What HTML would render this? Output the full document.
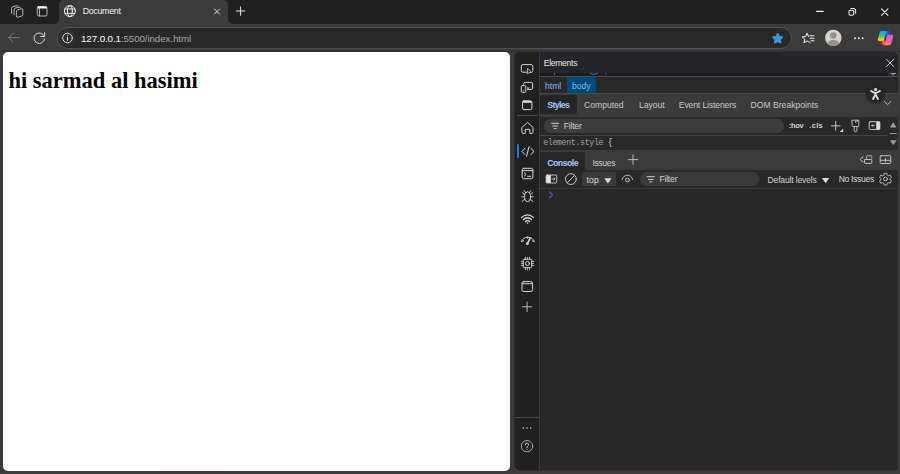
<!DOCTYPE html>
<html lang="en">
<head>
<meta charset="utf-8">
<title>Document</title>
<style>
*{box-sizing:border-box;margin:0;padding:0}
html,body{width:900px;height:474px;overflow:hidden;background:#3b3b3b}
body{font-family:"Liberation Sans",sans-serif;color:#e3e3e3;position:relative}
.abs{position:absolute}
.t{position:absolute;white-space:nowrap;line-height:1;transform-origin:0 50%;font-size:8.6px;color:#dedede}
.b{font-weight:bold}
#icons{position:absolute;left:0;top:0;width:900px;height:474px;overflow:visible}
/* ---------- browser chrome ---------- */
#strip{left:0;top:0;width:900px;height:23.6px;background:#202020}
#tab{left:58.8px;top:0;width:169.4px;height:24px;background:#3b3b3b;border-radius:5px 5px 0 0}
#tab:before,#tab:after{content:"";position:absolute;bottom:.4px;width:5px;height:5px}
#tab:before{left:-5px;background:radial-gradient(circle at 0 0,#202020 4.6px,#3b3b3b 5.2px)}
#tab:after{right:-5px;background:radial-gradient(circle at 100% 0,#202020 4.6px,#3b3b3b 5.2px)}
#omni{left:56.5px;top:27.4px;width:735.3px;height:22px;border-radius:11px;background:#282828;border:1px solid #525252}
#bottomline{left:0;top:473.3px;width:900px;height:.7px;background:linear-gradient(90deg,#3c3b3b,#453a3a 30%,#4c3838 58%,#453a3a 85%,#3d3b3b)}
/* ---------- page ---------- */
#page{left:3px;top:52px;width:507.3px;height:418.7px;background:#fff;border-radius:5px}
#page h1{position:absolute;left:5.4px;top:18.1px;font-family:"Liberation Serif",serif;font-weight:bold;font-size:22.5px;color:#000;white-space:nowrap;line-height:1}
/* ---------- devtools ---------- */
#dt{left:0;top:0;width:900px;height:474px;clip-path:inset(52px 2.1px 3.7px 514.5px round 5px 5px 3.5px 5px)}
#dt div{position:absolute}
</style>
</head>
<body>
<!-- tab strip -->
<div id="strip" class="abs"></div>
<div id="tab" class="abs"></div>
<span class="t" id="tabtitle" style="left:82.7px;top:6.7px;font-size:8.8px;color:#f2f2f2;letter-spacing:-0.28px">Document</span>

<!-- toolbar -->
<div id="omni" class="abs"></div>
<span class="t" id="url" style="left:81.0px;top:33.5px;font-size:9.8px;color:#fff;letter-spacing:-0.11px">127.0.0.1<span style="color:#a6a6a6">:5500/index.html</span></span>

<div class="abs" style="left:0;top:50px;width:900px;height:2px;background:linear-gradient(#3b3b3b,#343434 45%,#2a2a2a)"></div>
<!-- page -->
<div id="page" class="abs"><h1>hi sarmad al hasimi</h1></div>

<!-- devtools -->
<div id="dt" class="abs">
  <div style="left:514px;top:52px;width:385px;height:420px;background:#272727"></div>
  <!-- activity bar -->
  <div style="left:514px;top:52px;width:25.4px;height:420px;background:#202020"></div>
  <div style="left:539.2px;top:52px;width:.9px;height:420px;background:#3a3a3a"></div>
  <div style="left:516.7px;top:115px;width:21.4px;height:.9px;background:#4a4a4a"></div>
  <div style="left:514px;top:416.5px;width:25.4px;height:.9px;background:#464646"></div>
  <div style="left:517.3px;top:144px;width:1.8px;height:14px;background:#1a7fdc;border-radius:1px"></div>
  <!-- elements header -->
  <div style="left:540px;top:52px;width:358px;height:23.8px;background:#24252b"></div>
  <div style="left:540px;top:72.6px;width:348.3px;height:3.2px;background:#1b1b1f"></div>
  <div style="left:888.3px;top:72.6px;width:10px;height:3.2px;background:#27282c"></div>
  <div style="left:540px;top:75.7px;width:358px;height:.9px;background:#4c4c4c"></div>
  <!-- breadcrumbs -->
  <div style="left:540px;top:76.6px;width:358px;height:16.7px;background:#282828"></div>
  <div style="left:566.8px;top:76.6px;width:29px;height:16.6px;background:#004a77"></div>
  <!-- styles tab row -->
  <div style="left:540px;top:93.2px;width:358px;height:23.6px;background:#3b3b3b"></div>
  <div style="left:540px;top:92.9px;width:358px;height:.8px;background:#484848"></div>
  <div style="left:540px;top:95.2px;width:36.7px;height:19px;background:#252525;border-radius:2px"></div>
  <!-- filter row -->
  <div style="left:540px;top:116.8px;width:358px;height:18.4px;background:#282828"></div>
  <div style="left:544.1px;top:119px;width:240.4px;height:14.2px;background:#3d3d3d;border-radius:7.1px"></div>
  <div style="left:540px;top:134.6px;width:348px;height:.8px;background:#444"></div>
  <!-- element.style row -->
  <div style="left:540px;top:135.6px;width:348px;height:14.8px;background:#282828"></div>
  <div style="left:888px;top:116.8px;width:10px;height:33.6px;background:#292929"></div>
  <!-- drawer header -->
  <div style="left:540px;top:150.4px;width:358px;height:19.3px;background:#3b3b3b"></div>
  <div style="left:540px;top:152.4px;width:45px;height:17.4px;background:#262626;border-radius:2px 2px 0 0"></div>
  <!-- console toolbar -->
  <div style="left:540px;top:169.7px;width:358px;height:17.8px;background:#282828"></div>
  <div style="left:540px;top:187.7px;width:358px;height:.9px;background:#3a3a3a"></div>
  <div style="left:582.2px;top:172.3px;width:33.8px;height:13.7px;background:#3b3b3b;border-radius:2px"></div>
  <div style="left:639.8px;top:172.1px;width:119.6px;height:13.7px;background:#3a3a3a;border-radius:6.9px"></div>
</div>

<!-- devtools text -->
<span class="t" id="tElements" style="left:543.7px;top:59.0px;color:#e6e6e6;letter-spacing:-0.29px">Elements</span>
<span class="t" id="tHtml" style="left:545.0px;top:81.8px;color:#8ab4f8">html</span>
<span class="t" id="tBody" style="left:572.0px;top:81.8px;color:#8ab4f8">body</span>
<span class="t b" id="tStyles" style="left:547.2px;top:100.5px;font-size:8.8px;color:#a6c4f7;letter-spacing:-0.65px">Styles</span>
<span class="t" id="tComputed" style="left:584.0px;top:101.2px;color:#c8c8c8">Computed</span>
<span class="t" id="tLayout" style="left:638.9px;top:101.2px;color:#c8c8c8">Layout</span>
<span class="t" id="tEvent" style="left:678.8px;top:101.2px;color:#c8c8c8;letter-spacing:-0.13px">Event Listeners</span>
<span class="t" id="tDom" style="left:750.6px;top:101.2px;color:#c8c8c8">DOM Breakpoints</span>
<span class="t" id="tFilter1" style="left:563.7px;top:122.1px;color:#d0d0d0;letter-spacing:-0.2px">Filter</span>
<span class="t b" id="tHov" style="left:788.8px;top:122.2px;font-size:7.4px;color:#d4d4d4;letter-spacing:-0.3px">:hov</span>
<span class="t b" id="tCls" style="left:809.2px;top:122.2px;font-size:7.4px;color:#d4d4d4;letter-spacing:0.4px">.cls</span>
<span class="t" id="tElStyle" style="left:543.2px;top:138.9px;font-family:'Liberation Mono',monospace;font-size:8.3px;letter-spacing:-0.37px;color:#a2a2a2">element.style <span style="color:#d8d0c0">{</span></span>
<span class="t b" id="tConsole" style="left:547.2px;top:158.5px;font-size:8.8px;color:#a6c4f7;letter-spacing:-0.55px">Console</span>
<span class="t" id="tIssues" style="left:592.4px;top:158.7px;color:#d0d0d0;letter-spacing:-0.36px">Issues</span>
<span class="t" id="tTop" style="left:586.4px;top:175.9px;color:#d8d8d8;letter-spacing:0.23px">top</span>
<span class="t" id="tFilter2" style="left:659.4px;top:175.4px;color:#d0d0d0;letter-spacing:-0.2px">Filter</span>
<span class="t" id="tDefault" style="left:767.5px;top:175.6px;color:#d0d0d0;letter-spacing:-0.17px">Default levels</span>
<span class="t" id="tNoIssues" style="left:838.7px;top:174.9px;color:#d8d8d8;letter-spacing:-0.34px">No Issues</span>

<svg id="icons" viewBox="0 0 900 474" fill="none" stroke="#d6d6d6" stroke-width="1" stroke-linecap="round" stroke-linejoin="round">
<!-- ===== tab strip icons ===== -->
<g stroke="#e4e4e4" stroke-width=".75">
  <!-- workspaces -->
  <path d="M16.4 11.6q0-1.3 1.2-1.7l3.7-1.1q1.5-.4 1.5 1.1v4.5q0 1.300-1.200 1.700l-3.700 1.100q-1.500.400-1.500-1.100z"/>
  <path d="M14 14.700v-4.800q0-1.300 1.200-1.700l3.700-1.100q1.200-.3 1.500.500"/>
  <path d="M11.500 13.300v-4.800q0-1.300 1.200-1.700l3.700-1.100q1.200-.3 1.500.500"/>
  <!-- tab actions -->
  <rect x="37.300" y="6.500" width="9.700" height="9.500" rx="1.600"/>
  <path d="M37.500 7.500h9.300" stroke="#f4f4f4" stroke-width="2" stroke-linecap="butt"/>
  <path d="M39.500 8.500v7.400"/>
  <!-- globe -->
  <g stroke="#f0f0f0" stroke-width=".95"><circle cx="69.900" cy="11.100" r="5.500"/>
  <ellipse cx="69.900" cy="11.100" rx="2.500" ry="5.500"/>
  <path d="M65 9h9.800M65 13.300h9.800"/></g>
</g>
<g stroke="#e6e6e6" stroke-width="1">
  <!-- tab close -->
  <path d="M214.500 9l5 5M219.500 9l-5 5" stroke-width=".95"/>
  <!-- new tab -->
  <path d="M236.300 11h8.600M240.600 6.700v8.600"/>
  <!-- window controls -->
  <path d="M816.600 11.400h6.600" stroke-width="1.100" stroke="#f2f2f2"/>
  <rect x="849" y="10.300" width="4.700" height="4.900" rx="1.300" stroke-width="1.050" stroke="#f2f2f2"/>
  <path d="M850.900 8.500h2.500q2.200 0 2.200 2.200v2.500" stroke-width="1.050" stroke="#f2f2f2"/>
  <path d="M881.500 8.800l6.500 6.500M888 8.800l-6.500 6.500" stroke-width="1.050" stroke="#f2f2f2"/>
</g>
<!-- ===== toolbar icons ===== -->
<g stroke="#7c7c7c" stroke-width="1">
  <path d="M8.800 37.600h10.600M13.300 33l-4.600 4.600l4.600 4.600"/>
</g>
<g stroke="#d8d8d8" stroke-width="1">
  <!-- refresh -->
  <path d="M44.300 36.300a5.300 5.300 0 1 0 .3 2.600"/>
  <path d="M44.700 32.600v3.900h-3.900"/>
  <!-- info -->
  <circle cx="67.400" cy="38.200" r="8.400" fill="#313131" stroke="none"/>
  <circle cx="67.500" cy="38" r="4.800" stroke-width=".95" stroke="#e4e4e4"/>
  <path d="M67.500 37.500v2.800" stroke-width="1" stroke="#e4e4e4"/>
  <circle cx="67.500" cy="35.800" r=".6" fill="#e4e4e4" stroke="none"/>
</g>
<!-- favourite star (filled) -->
<path d="M777.70 33.70L779.29 36.52L782.46 37.15L780.27 39.53L780.64 42.75L777.70 41.40L774.76 42.75L775.13 39.53L772.94 37.15L776.11 36.52z" fill="#3f95dc" stroke="#3f95dc" stroke-width="1.5"/>
<!-- favourites -->
<g stroke="#f0f0f0" stroke-width="1">
  <path d="M808.51 36.56L807.10 33.20L805.69 36.56L802.06 36.86L804.82 39.24L803.98 42.79L807.10 40.90L810.22 42.79"/>
  <path d="M809.800 35.800h4.200M810.200 38.300h3.800M811 40.800h3" stroke-width="1.100" stroke="#ececec"/>
</g>
<!-- profile -->
<clipPath id="pc"><circle cx="833.300" cy="37.900" r="8.200"/></clipPath>
<circle cx="833.300" cy="37.900" r="8.200" fill="#d6d3cf" stroke="none"/>
<circle cx="833.300" cy="35.500" r="3.200" fill="#96928e" stroke="none"/>
<ellipse cx="833.300" cy="46.300" rx="7.200" ry="6.600" fill="#96928e" stroke="none" clip-path="url(#pc)"/>
<!-- more -->
<g fill="#efefef" stroke="none"><circle cx="855" cy="38.200" r=".95"/><circle cx="858.800" cy="38.200" r=".95"/><circle cx="862.600" cy="38.200" r=".95"/></g>
<!-- copilot -->
<defs>
  <linearGradient id="cpl" x1="0" y1="0" x2="0" y2="1"><stop offset="0" stop-color="#1f9cf2"/><stop offset=".3" stop-color="#20b8c8"/><stop offset=".55" stop-color="#4cc85e"/><stop offset=".8" stop-color="#e8d030"/><stop offset="1" stop-color="#f8a428"/></linearGradient>
  <linearGradient id="cpr" x1="0" y1="0" x2="0" y2="1"><stop offset="0" stop-color="#b860f0"/><stop offset=".4" stop-color="#e85cc0"/><stop offset=".7" stop-color="#f6648a"/><stop offset="1" stop-color="#f8903c"/></linearGradient>
  <linearGradient id="cpt" x1="0" y1="0" x2="1" y2="0"><stop offset="0" stop-color="#2a78e8"/><stop offset="1" stop-color="#1c3fc4"/></linearGradient>
  <linearGradient id="cpb" x1="0" y1="0" x2="1" y2="0"><stop offset="0" stop-color="#f03a2a"/><stop offset="1" stop-color="#f8783a"/></linearGradient>
</defs>
<g stroke="none">
  <path d="M886.100 31h2q1.300 0 1.700 1.300l.7 2.500h-5.200z" fill="url(#cpt)"/>
  <path d="M881.400 31h4.900l-2.500 10.200h-4.500q-2.100 0-1.500-2l1.800-6.500q.5-1.700 1.800-1.700z" fill="url(#cpl)"/>
  <path d="M881.500 41h4l-.9 4.200h-1q-1.500 0-1.800-1.600z" fill="url(#cpb)"/>
  <path d="M887.100 34.800h4.500q2.100 0 1.500 2l-1.800 6.600q-.5 1.800-2 1.800h-4.700z" fill="url(#cpr)"/>
</g>
<!-- ===== devtools activity bar ===== -->
<g stroke="#d6d6d6" stroke-width="1">
  <!-- inspect -->
  <path d="M526.500 72.200h-3.600q-1.600 0-1.600-1.600v-4.400q0-1.600 1.600-1.600h8.300q1.600 0 1.600 1.600v4.400q0 .9-.5 1.300"/>
  <path d="M527.600 68.600v5.400l1.500-1.500h2.200z" stroke-width=".8"/>
  <!-- device emulation -->
  <path d="M523.700 84.500v-.7q0-1.400 1.400-1.400h6.100q1.400 0 1.400 1.400v4.300q0 1.400-1.400 1.400h-3.700"/>
  <rect x="521.300" y="85.600" width="4.500" height="6.800" rx="1"/>
  <path d="M527.400 88h1.600M523.400 90.800h.3"/>
  <!-- welcome -->
  <rect x="522.500" y="100.800" width="9.400" height="8.800" rx="1.500"/>
  <path d="M522.700 101.900h9" stroke-width="1.900" stroke-linecap="butt"/>
  <!-- home -->
  <path d="M522 127.400l5.500-5l5.500 5v5.300q0 .7-.7.700h-2.500v-4h-4.600v4h-2.500q-.7 0-.7-.7z" stroke-width="1"/>
  <!-- elements </> -->
  <path d="M525 148.300l-3.100 3.100l3.100 3.100M530.900 148.300l3.100 3.100l-3.100 3.100M529 146.700l-2.400 9.600" stroke-width="1"/>
  <!-- console -->
  <rect x="522.200" y="168.300" width="10.700" height="10.400" rx="1.500"/>
  <path d="M522.400 170.600h10.300M524.400 172.800l1.800 1.600l-1.800 1.600M527.600 176.300h3.200"/>
  <!-- bug (sources) -->
  <path d="M524.600 195.400q0-3.600 2.900-3.600t2.900 3.600v2.600q0 3.600-2.900 3.600t-2.900-3.600z"/>
  <path d="M525.500 192.500l-1.500-1.900M529.500 192.500l1.500-1.900M524.500 196.800h-2.700M524.600 199.300l-2.400 2M524.600 194.500l-2.400-1.900M530.500 196.800h2.700M530.400 199.300l2.400 2M530.400 194.500l2.400-1.900" stroke-width=".9"/>
  <!-- network (wifi) -->
  <path d="M521.600 217.400q5.900-5.200 11.800 0M523.500 219.500q4-3.500 8 0M525.400 221.500q2.100-1.800 4.200 0" stroke="#e0e0e0" stroke-width="1.250"/>
  <circle cx="527.500" cy="223" r=".85" fill="#cdcdcd" stroke="none"/>
  <!-- performance -->
  <path d="M521.300 241.700a7.100 7.100 0 0 1 13.200 0"/>
  <path d="M527.500 243.500l2.500-5.100" stroke-width="1.500"/>
  <circle cx="527.400" cy="243.700" r="1.350" fill="#d6d6d6" stroke="none"/>
  <path d="M522.300 241.500l1.400-.9M527.600 236.700v1.700M533.500 241.500l-1.400-.9" stroke-width=".9"/>
  <!-- memory -->
  <rect x="523.200" y="259.200" width="8.500" height="8.500" rx="1.400"/>
  <circle cx="527.450" cy="263.450" r="2"/>
  <path d="M525.400 257.200v1.800M527.450 257.200v1.800M529.500 257.200v1.800M525.400 268v1.800M527.450 268v1.800M529.500 268v1.800M521.300 261.400h1.700M521.300 263.450h1.700M521.300 265.500h1.700M531.900 261.400h1.700M531.900 263.450h1.700M531.900 265.500h1.700" stroke-width=".8"/>
  <!-- application -->
  <rect x="522" y="281.600" width="10.600" height="9.900" rx="1.800"/>
  <path d="M522.200 283.700h10.200"/>
  <!-- more tools + -->
  <path d="M522.300 306.800h9.600M527.100 302v9.600" stroke="#b8b8b8"/>
  <!-- help -->
  <circle cx="527" cy="446.200" r="5.700" stroke="#c4c4c4" stroke-width=".8"/>
  <path d="M525.300 444.800q0-1.700 1.700-1.700t1.700 1.600q0 1-1 1.600q-.7.500-.7 1.400" stroke-width=".9"/>
  <circle cx="527" cy="449.300" r=".55" fill="#cdcdcd" stroke="none"/>
</g>
<g fill="#d0d0d0" stroke="none"><circle cx="523.300" cy="428.100" r=".8"/><circle cx="527" cy="428.100" r=".8"/><circle cx="530.700" cy="428.100" r=".8"/></g>
<!-- ===== devtools main icons ===== -->
<g stroke="#d0d0d0" stroke-width=".9">
  <!-- close devtools -->
  <path d="M886.400 59.200l7.400 7.400M893.800 59.200l-7.400 7.400" stroke="#dadada"/>
  <!-- chevron more tabs -->
  <path d="M884.500 101.600l3.100 3l3.100-3" stroke="#c4c4c4"/>
  <!-- filter icon (styles) -->
  <path d="M551.600 123.300h7.200M552.900 126h4.600M554.300 128.600h1.800" stroke-width="1"/>
  <!-- new style rule + -->
  <path d="M831.300 125.800h8.800M835.700 121.400v8.800"/>
  <path d="M843.200 128.500v3.500h-3.500z" fill="#d8d8d8" stroke="none"/>
  <!-- brush -->
  <path d="M852.200 120.200h6.600v5.600q0 .7-.7.7h-5.200q-.7 0-.7-.7zM854.200 126.600v3.600q0 1.500 1.350 1.500t1.350-1.500v-3.600M855.700 120.200v2.400M857.300 120.200v1.500" stroke-width=".85"/>
  <!-- toggle sidebar (styles) -->
  <rect x="869.200" y="121.700" width="10.700" height="7.800" rx="1"/>
  <path d="M876.200 121.800h3.700v7.600h-3.700z" fill="#e0e0e0" stroke="none"/>
  <path d="M872 125.600h2.400" stroke-width=".8"/><path d="M872.800 124.200v2.800l-1.700-1.400z" fill="#d0d0d0" stroke="none"/>
  <!-- drawer + -->
  <path d="M628.300 159.600h9.400M633 154.900v9.400" stroke="#c6c6c6"/>
  <!-- drawer right icons -->
  <path d="M863 157q-2.600 1.200-2.600 2.400q0 1.200 2.600 2.400" stroke-width="1"/>
  <rect x="864.500" y="159.500" width="7.300" height="3.900" rx=".7"/>
  <path d="M866.600 158.300v-1.700q0-.9.900-.9h3.400q.9 0 .9.900v1.700" stroke-width=".8" stroke-dasharray="1.500 .8"/>
  <rect x="880.200" y="155.700" width="10.600" height="7.800" rx="1"/>
  <path d="M880.400 160.300h10.200M885.500 158.800v3"/>
  <!-- console sidebar toggle -->
  <rect x="546.100" y="175" width="10.700" height="8" rx="1"/>
  <path d="M546.200 175.100h4.700v7.800h-4.700z" fill="#e4e4e4" stroke="none"/>
  <path d="M552 179h3M553.800 177.800l1.200 1.200l-1.200 1.200" stroke-width=".8"/>
  <!-- clear console -->
  <circle cx="570.900" cy="179.100" r="5.400"/>
  <path d="M567.100 182.900l7.600-7.600"/>
  <!-- eye -->
  <path d="M622 179.600q1.600-4.400 5.400-4.400t5.400 4.400"/>
  <circle cx="627.400" cy="180" r="1.900"/>
  <!-- filter icon (console) -->
  <path d="M647.100 176.700h7.300M648.400 179.400h4.700M649.800 181.900h1.900" stroke-width="1"/>
  <!-- gear -->
  <circle cx="885.500" cy="179" r="1.900"/>
  <path d="M884.300 173.300h2.400l.5 1.700l1.300.7l1.700-.5l1.200 2.100l-1.200 1.200v1.400l1.200 1.200l-1.200 2.100l-1.700-.5l-1.300.7l-.5 1.700h-2.400l-.5-1.700l-1.300-.7l-1.700.5l-1.200-2.100l1.200-1.200v-1.400l-1.200-1.200l1.200-2.100l1.700.5l1.300-.7z" stroke-width=".85"/>
</g>
<g fill="#e0e0e0" stroke="none">
  <path d="M604.300 178.300h7.200l-3.600 5.100z"/>
  <path d="M822 178.100h7.200l-3.600 5.100z"/>
</g>
<!-- scrollbar bits -->
<g fill="#9c9c9c" stroke="none">
  <path d="M889.800 127.600l3.400-5.300l3.400 5.300z"/>
  <path d="M889.900 140.300h6.800l-3.400 4.800z"/>
  <rect x="889.800" y="133" width="6.800" height="1"/>
  <path d="M890.600 73.100h5.400v.9h-5.400zM891.700 74.200h3.200l-1.600 1.500z" fill="#9a9a9a"/>
</g>
<!-- cut-off DOM text fragments -->
<g stroke="none">
  <circle cx="554.500" cy="73.700" r=".5" fill="#d8d8d8"/>
  <circle cx="606" cy="73.700" r=".5" fill="#6aa8e8"/>
  <path d="M590 73.300q3.800 2.600 7.600 0" stroke="#2f8fd0" stroke-width=".9" fill="none"/>
</g>
<!-- console prompt -->
<path d="M549.400 191.900l3.300 3l-3.300 3" stroke="#4f8fe0" stroke-width=".95"/>
<!-- accessibility floating button -->
<circle cx="875.500" cy="94.500" r="9.700" fill="#161616" opacity=".35" stroke="none"/>
<circle cx="875.500" cy="94.200" r="8.900" fill="#272727" stroke="none"/>
<circle cx="875.600" cy="89.500" r="1.600" fill="#dedede" stroke="none"/>
<path d="M871.100 91l4.400 2.300l4.400-2.300M875.500 93v2.400M875.500 94.600l-2.500 4.300M875.500 94.600l2.500 4.300" stroke="#dedede" stroke-width="1.900" stroke-linecap="round" stroke-linejoin="round" fill="none"/>
</svg>
<div id="bottomline" class="abs"></div>
</body>
</html>
